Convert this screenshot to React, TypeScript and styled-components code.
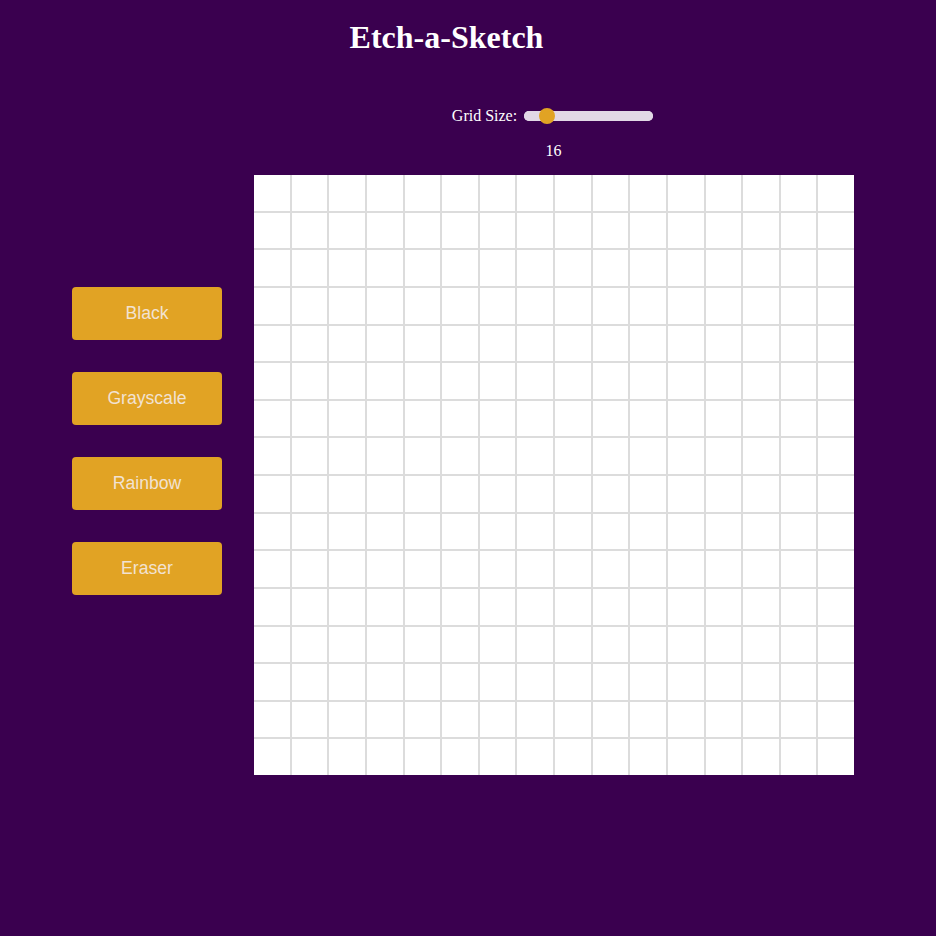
import React, { useState } from "react";
import styled, { createGlobalStyle } from "styled-components";

const Global = createGlobalStyle`
  html, body {
    margin: 0;
    padding: 0;
    background: #3a004f;
  }
  body {
    font-family: "Liberation Serif", "Times New Roman", serif;
    color: #ffffff;
    min-height: 936px;
  }
`;

const Page = styled.div`
  display: flex;
  flex-direction: column;
  padding-top: 19px;
`;

const Title = styled.h1`
  margin: 0;
  padding-right: 43px;
  text-align: center;
  font-family: "Liberation Serif", "Times New Roman", serif;
  font-weight: bold;
  font-size: 32px;
  line-height: 37px;
  color: #ffffff;
`;

const Main = styled.div`
  display: flex;
  flex-direction: row;
  align-items: flex-start;
  padding-left: 72px;
  gap: 32px;
  margin-top: 50px;
`;

const Sidebar = styled.div`
  display: flex;
  flex-direction: column;
  gap: 32px;
  width: 150px;
  padding-top: 181px;
`;

const ModeButton = styled.button`
  width: 150px;
  height: 53px;
  border: none;
  border-radius: 4px;
  background: #e1a324;
  color: #f2e2d2;
  font-family: "Liberation Sans", Arial, sans-serif;
  font-size: 17.6px;
  cursor: pointer;
  padding: 0;
`;

const Board = styled.div`
  display: flex;
  flex-direction: column;
  align-items: center;
  width: 600px;
`;

const Controls = styled.div`
  display: flex;
  flex-direction: row;
  align-items: center;
  gap: 7px;
  height: 20px;
  font-size: 16px;
  margin-left: -3px;
`;

const Label = styled.label`
  font-family: "Liberation Serif", "Times New Roman", serif;
  font-size: 16px;
  color: #ffffff;
`;

const Slider = styled.input`
  -webkit-appearance: none;
  appearance: none;
  width: 129px;
  height: 10px;
  margin: 0;
  padding: 0;
  border-radius: 5px;
  background: #e2d8e6;
  outline: none;

  &::-webkit-slider-runnable-track {
    height: 10px;
    border-radius: 5px;
    background: #e2d8e6;
  }
  &::-webkit-slider-thumb {
    -webkit-appearance: none;
    appearance: none;
    width: 16px;
    height: 16px;
    margin-top: -3px;
    border-radius: 50%;
    background: #e1a324;
    border: none;
  }
  &::-moz-range-thumb {
    width: 16px;
    height: 16px;
    border-radius: 50%;
    background: #e1a324;
    border: none;
  }
`;

const SizeValue = styled.div`
  margin-top: 16px;
  font-size: 16px;
  line-height: 18px;
  margin-left: -1px;
`;

const Grid = styled.div<{ $n: number }>`
  margin-top: 15px;
  width: 600px;
  height: 600px;
  display: grid;
  grid-template-columns: repeat(${(p) => p.$n}, 1fr);
  grid-template-rows: repeat(${(p) => p.$n}, 1fr);
  gap: 2px;
  background: #dcdcdc;
`;

const Cell = styled.div`
  background: #ffffff;
`;

export default function App() {
  const [size, setSize] = useState(16);
  const cells = Array.from({ length: size * size }, (_, i) => i);
  return (
    <>
      <Global />
      <Page>
        <Title>Etch-a-Sketch</Title>
        <Main>
          <Sidebar>
            <ModeButton>Black</ModeButton>
            <ModeButton>Grayscale</ModeButton>
            <ModeButton>Rainbow</ModeButton>
            <ModeButton>Eraser</ModeButton>
          </Sidebar>
          <Board>
            <Controls>
              <Label htmlFor="size">Grid Size:</Label>
              <Slider
                id="size"
                type="range"
                min={3}
                max={100}
                value={size}
                onChange={(e) => setSize(Number(e.target.value))}
              />
            </Controls>
            <SizeValue>{size}</SizeValue>
            <Grid $n={size}>
              {cells.map((i) => (
                <Cell key={i} />
              ))}
            </Grid>
          </Board>
        </Main>
      </Page>
    </>
  );
}
